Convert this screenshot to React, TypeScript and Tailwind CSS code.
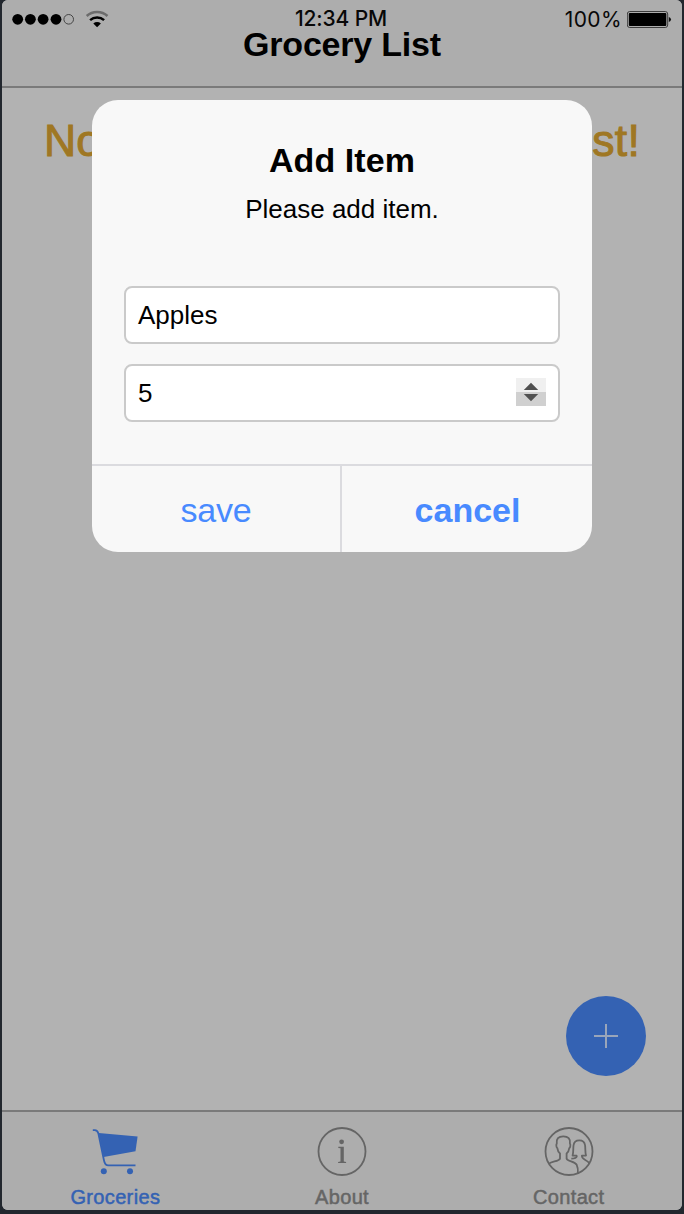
import type { ReactNode } from "react";

function StatusBar() {
  return (
    <div className="flex h-[26px] items-start justify-between pt-[11px] pr-[10px] pl-[10px] font-['Inter',sans-serif] text-[21px] leading-[15px] text-[#080808]">
      <div className="flex w-[200px] items-start">
        <svg className="-mt-[2px]" width="100" height="20" viewBox="0 0 100 20" fill="none">
          <circle cx="5.700" cy="10.300" r="5.400" fill="#000" />
          <circle cx="18.400" cy="10.300" r="5.400" fill="#000" />
          <circle cx="31.100" cy="10.300" r="5.400" fill="#000" />
          <circle cx="44" cy="10.300" r="5.400" fill="#000" />
          <circle cx="56.700" cy="10.300" r="4.800" stroke="#454545" strokeWidth="1" />
          <path d="M74.700 7a15.200 15.200 0 0 1 20.800 0" stroke="#6c6c6c" strokeWidth="2.500" />
          <path d="M78.100 11.200a10.400 10.400 0 0 1 14 0" stroke="#000" strokeWidth="2.500" />
          <path d="M81.300 14.400a5.600 5.600 0 0 1 7.600 0l-3.800 3.800z" fill="#000" />
        </svg>
      </div>
      <span className="-ml-[2px] font-medium tracking-[-0.15px] whitespace-nowrap">12:34 PM</span>
      <div className="flex w-[200px] items-start justify-end gap-[5px]">
        <span className="pt-px tracking-[0.4px]">100%</span>
        <svg className="-mt-px" width="45" height="19" viewBox="0 0 45 19">
          <rect x="0.300" y="1.500" width="40.400" height="16" rx="2.500" fill="none" stroke="#3c3c3c" strokeWidth="1" />
          <rect x="1.800" y="3" width="37.500" height="13" rx="1" fill="#000" />
          <path d="M41.800 7v5q2.200-.6 2.200-2.500t-2.200-2.500z" fill="#111" />
        </svg>
      </div>
    </div>
  );
}

function CartIcon() {
  return (
    <svg width="50" height="50" viewBox="0 0 50 50" fill="none" stroke="#3462b3">
      <path d="M2.800 4.200h2q2.600 0 3.600 3.400L14 34.500q1 4.900 4.300 4.900H45.500" strokeWidth="1.800" />
      <path d="M8.600 7 47.600 10.400 45.500 25.300 13.600 31z" fill="#3462b3" stroke="none" />
      <circle cx="13.800" cy="45.200" r="3" fill="#3462b3" stroke="none" />
      <circle cx="40" cy="45.200" r="3" fill="#3462b3" stroke="none" />
    </svg>
  );
}

function InfoIcon() {
  return (
    <svg width="50" height="50" viewBox="0 0 50 50" fill="none">
      <circle cx="25" cy="25.500" r="23.500" stroke="#656565" strokeWidth="1.800" />
      <circle cx="24.600" cy="15.800" r="2.400" fill="#656565" />
      <path d="M21.300 20.800H26.800V35.400l2.300.5v1H21.100v-1l2.400-.5V22.300l-2.200-.4z" fill="#656565" />
    </svg>
  );
}

function ContactsIcon() {
  return (
    <svg width="50" height="50" viewBox="0 0 50 50" fill="none" stroke="#656565" strokeWidth="1.800" strokeLinejoin="round">
      <circle cx="25" cy="25.500" r="23.500" />
      <path d="M5 37.600C8.200 35.200 15 35.400 16 32.600V27.500C14.300 26.200 13.700 24.600 13.400 22.300 12.200 21.500 12 18.600 12.800 17.500 12 12.800 14.500 10.300 19.300 10.300S26.700 12.800 25.900 17.500C26.700 18.600 26.400 21.500 25.200 22.300 24.900 24.600 24.200 26.200 22.600 27.500V32.600C23.800 35.800 30.500 34.900 32.700 38.800 33.900 41.200 34.100 44.200 33.900 47.300" />
      <path d="M27.300 32.600C29.800 32.600 32.400 32.200 32.800 30.400L32.600 29.700 28.600 29.500C29.600 26 29.100 22.500 29.500 19.500 29.900 16.300 31.900 14.400 35.300 14.400S40.700 16.300 41.100 19.500C41.500 22.500 41 26 42 29.500L37.900 29.700C37.500 34.300 43.500 33.400 45.500 37.800" />
    </svg>
  );
}

function Tab({ icon, label, active }: { icon: ReactNode; label: string; active?: boolean }) {
  return (
    <div className={`flex flex-1 flex-col items-center pt-[14px] ${active ? "text-[#3462b3]" : "text-[#656565]"}`}>
      {icon}
      <span className="mt-[9px] text-[20px] leading-[24px] tracking-[0.35px] [-webkit-text-stroke:0.5px_currentColor]">{label}</span>
    </div>
  );
}

function Field({ value, children }: { value: string; children?: ReactNode }) {
  return (
    <div className="flex h-[58px] items-center justify-between rounded-lg border-2 border-[#cacaca] bg-white px-3 text-[26px] leading-[30px]">
      <span>{value}</span>
      {children}
    </div>
  );
}

function Dialog() {
  return (
    <div className="absolute top-[100px] left-[92px] flex h-[452px] w-[500px] flex-col overflow-hidden rounded-[26px] bg-[#f8f8f8] text-center text-black">
      <h2 className="mt-[40px] text-[34px] leading-[40px] font-bold tracking-[0.1px]">Add Item</h2>
      <p className="mt-[14px] text-[26px] leading-[30px]">Please add item.</p>
      <div className="mt-[62px] flex flex-col gap-5 px-8">
        <Field value="Apples" />
        <Field value="5">
          <svg className="-mt-[2px]" width="30" height="28" viewBox="0 0 30 28">
            <rect width="30" height="14" fill="#f0f0f0" />
            <rect y="14" width="30" height="14" fill="#d0d0d0" />
            <path d="M7.800 12 15 4.800l7.200 7.200zM7.800 16l7.200 7.200 7.200-7.200z" fill="#505050" />
          </svg>
        </Field>
      </div>
      <div className="mt-auto flex h-[88px] border-t-2 border-[#dbdbdf] text-[34px] text-[#488aff]">
        <button className="w-[250px] border-r-2 border-[#dbdbdf] pt-[2px] tracking-[-0.2px]">save</button>
        <button className="flex-1 pt-[2px] pl-px font-bold">cancel</button>
      </div>
    </div>
  );
}

export default function App() {
  return (
    <div className="h-[1214px] w-[684px] bg-[#22272e] px-[2px] pb-[4px] font-['Liberation_Sans',Arial,sans-serif]">
      <div className="flex h-full flex-col overflow-hidden rounded-[6px] bg-[#b2b2b2]">
        <header className="h-[88px] border-b-2 border-[#7a7a7a] bg-[#adadad]">
          <StatusBar />
          <h1 className="text-center text-[34px] leading-[36px] font-bold tracking-[-0.2px] text-black">Grocery List</h1>
        </header>
        <main className="flex flex-1 flex-col justify-between">
          <p className="pt-[28px] text-center text-[44.500px] leading-[50px] tracking-[0.25px] whitespace-nowrap text-[#9f7723] [-webkit-text-stroke:1px_currentColor]">
            No Items in your Grocery List!
          </p>
          <button className="mr-9 mb-[34px] flex size-20 items-center justify-center self-end rounded-full bg-[#3462b3]">
            <svg width="24" height="24" viewBox="0 0 24 24" fill="#99a5ba">
              <path d="M11 0h2v11h11v2H13v11h-2V13H0v-2h11z" />
            </svg>
          </button>
        </main>
        <nav className="flex h-[100px] border-t-2 border-[#7a7a7a] bg-[#adadad]">
          <Tab icon={<CartIcon />} label="Groceries" active />
          <Tab icon={<InfoIcon />} label="About" />
          <Tab icon={<ContactsIcon />} label="Contact" />
        </nav>
      </div>
      <Dialog />
    </div>
  );
}
